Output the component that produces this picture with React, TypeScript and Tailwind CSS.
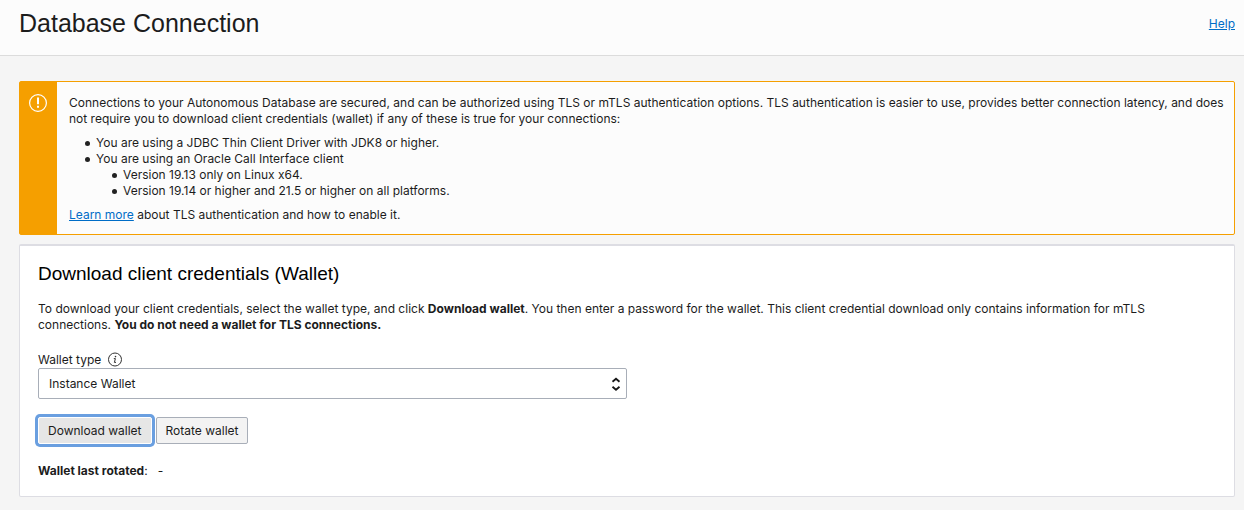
import type { ReactNode } from "react";

function Bullet({ children }: { children: ReactNode }) {
  return (
    <li className="flex gap-[6px] before:mt-[6px] before:size-[5px] before:shrink-0 before:rounded-full before:bg-[#222] before:content-['']">
      <div>{children}</div>
    </li>
  );
}

export default function App() {
  return (
    <div className="min-h-screen bg-[#f5f5f5] font-[Inter,'Liberation_Sans',sans-serif] text-[12px] leading-4 text-[#1c1c1c]">
      <header className="flex items-start justify-between border-b border-[#dcdcdc] bg-[#fcfcfc] pt-2 pr-[9px] pb-4 pl-[19px]">
        <h1 className="font-['Liberation_Sans',Arial,sans-serif] text-[25px] leading-[31px]">Database Connection</h1>
        <a href="#help" className="mt-2 text-[#006dc7] underline">Help</a>
      </header>
      <main className="flex flex-col gap-[9px] pt-[25px] pr-[9px] pb-[13px] pl-[19px]">
        <section className="flex rounded-[2px] border border-[#f59f00] bg-[#fcfcfc]" aria-label="Warning">
          <div className="w-[37px] shrink-0 bg-[#f59f00] pt-[11px] pl-2">
            <svg width="20" height="20" viewBox="0 0 20 20" fill="none" stroke="#fff" aria-hidden="true">
              <circle cx="10" cy="10" r="8.4" strokeWidth="1.2" />
              <path d="M10 4.6v6.6M10 12.8v2" strokeWidth="2" />
            </svg>
          </div>
          <div className="pt-[13px] pr-2 pb-[11px] pl-3">
            <p>Connections to your Autonomous Database are secured, and can be authorized using TLS or mTLS authentication options. TLS authentication is easier to use, provides better connection latency, and does not require you to download client credentials (wallet) if any of these is true for your connections:</p>
            <ul className="my-2 pl-4">
              <Bullet>You are using a JDBC Thin Client Driver with JDK8 or higher.</Bullet>
              <Bullet>
                You are using an Oracle Call Interface client
                <ul className="pl-4">
                  <Bullet>Version 19.13 only on Linux x64.</Bullet>
                  <Bullet>Version 19.14 or higher and 21.5 or higher on all platforms.</Bullet>
                </ul>
              </Bullet>
            </ul>
            <p><a href="#learn" className="text-[#006dc7] underline">Learn more</a> about TLS authentication and how to enable it.</p>
          </div>
        </section>
        <section className="rounded-[2px] border border-t-2 border-[#dddde3] bg-white px-[18px] pt-4 pb-[17px]">
          <h2 className="font-['Liberation_Sans',Arial,sans-serif] text-[19px] leading-6 text-black">Download client credentials (Wallet)</h2>
          <p className="mt-[15px] max-w-[1110px]">
            To download your client credentials, select the wallet type, and click <strong>Download wallet</strong>. You then enter a password for the wallet. This client credential download only contains information for mTLS connections. <strong>You do not need a wallet for TLS connections.</strong>
          </p>
          <div className="mt-[19px] flex items-center gap-[6px]">
            <label htmlFor="wallet-type">Wallet type</label>
            <button type="button" aria-label="About wallet types">
              <svg className="block" width="16" height="16" viewBox="0 0 16 16" fill="none" stroke="#333" aria-hidden="true">
                <circle cx="8" cy="7.5" r="6.5" />
                <path d="M6.8 6.6h1.6l-1 3.8h1.6" />
                <circle cx="8.5" cy="4.6" r=".8" fill="#333" stroke="none" />
              </svg>
            </button>
          </div>
          <div className="grid w-[49.97%] items-center">
            <select id="wallet-type" className="col-start-1 row-start-1 h-[31px] w-full appearance-none rounded-[2px] border border-[#a8aeb8] bg-white px-[10px]">
              <option>Instance Wallet</option>
              <option>Regional Wallet</option>
            </select>
            <svg className="pointer-events-none col-start-1 row-start-1 mr-[6px] justify-self-end" width="10" height="16" viewBox="0 0 10 16" fill="none" stroke="#161616" strokeWidth="1.8" aria-hidden="true">
              <path d="m1.5 5.8 3.5-3 3.5 3M1.5 10.8l3.5 3 3.5-3" />
            </svg>
          </div>
          <div className="mt-[18px] flex gap-1">
            <button type="button" className="h-[27px] rounded-[2px] border border-white bg-[#e6e6e6] px-[9px] ring-3 ring-[#6a9fe0]">Download wallet</button>
            <button type="button" className="h-[27px] rounded-[2px] border border-[#a8aeb8] bg-[#f3f3f3] px-[9px]">Rotate wallet</button>
          </div>
          <p className="mt-[19px]"><strong>Wallet last rotated</strong>:<span className="ml-[10px]">-</span></p>
        </section>
      </main>
    </div>
  );
}
